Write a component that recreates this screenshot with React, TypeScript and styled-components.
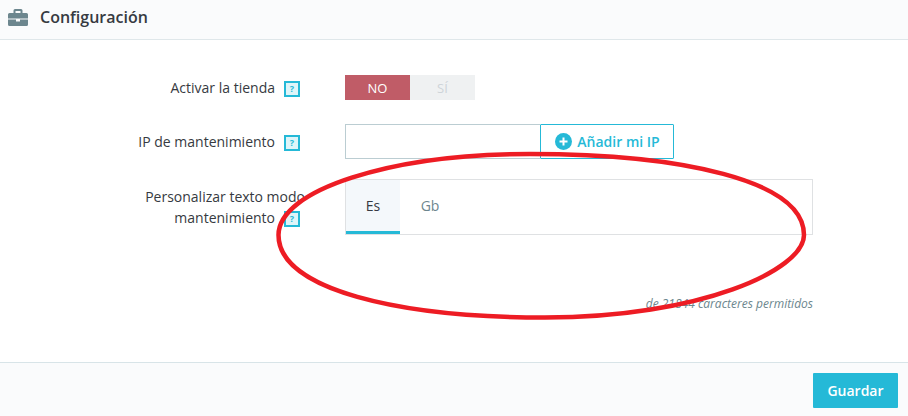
import styled, { createGlobalStyle } from "styled-components";

const GlobalStyle = createGlobalStyle`
  html, body {
    margin: 0;
    padding: 0;
    background: #fff;
    font-family: "Open Sans", "Liberation Sans", sans-serif;
    overflow: hidden;
  }
`;

const Page = styled.div`
  position: relative;
  width: 908px;
  height: 416px;
  display: flex;
  flex-direction: column;
`;

const Header = styled.div`
  height: 34px;
  box-sizing: content-box;
  display: flex;
  align-items: center;
  gap: 12px;
  padding: 0 0 5px 8px;
  background: #fafbfc;
  border-bottom: 1px solid #dfe7ea;
  color: #363a41;
  font-size: 16px;
  font-weight: 600;
  line-height: 34px;
`;

const Form = styled.div`
  flex: 1;
  display: flex;
  flex-direction: column;
  padding-top: 35px;
`;

const Row = styled.div<{ $mb: number }>`
  display: flex;
  align-items: flex-start;
  gap: 40px;
  margin-bottom: ${(p) => p.$mb}px;
`;

const Label = styled.div<{ $pt: number }>`
  width: 305px;
  box-sizing: border-box;
  padding: ${(p) => p.$pt}px 0 0 130px;
  text-align: right;
  font-size: 14px;
  line-height: 21px;
  color: #363a41;
`;

const Help = styled.span`
  display: inline-block;
  width: 16px;
  height: 16px;
  box-sizing: border-box;
  margin: 0 5px 0 9px;
  vertical-align: middle;
  border: 2px solid #25b9d7;
  background: #dff5f9;
  color: #25b9d7;
  font-size: 9px;
  font-weight: 700;
  line-height: 12px;
  text-align: center;
`;

const Switch = styled.div`
  display: flex;
  width: 130px;
  height: 25px;
`;

const SwitchOption = styled.div<{ $on?: boolean }>`
  flex: 1;
  display: flex;
  align-items: center;
  justify-content: center;
  font-size: 13px;
  font-weight: 400;
  background: ${(p) => (p.$on ? "#c05c67" : "#eff1f2")};
  color: ${(p) => (p.$on ? "#fff" : "#ced4d9")};
`;

const InputGroup = styled.div`
  display: flex;
  height: 35px;
`;

const IpInput = styled.input`
  width: 195px;
  height: 35px;
  box-sizing: border-box;
  padding: 0 8px;
  border: 1px solid #bbcdd2;
  border-right: 0;
  background: #fff;
  outline: none;
`;

const AddButton = styled.button`
  width: 134px;
  height: 35px;
  box-sizing: border-box;
  display: flex;
  align-items: center;
  justify-content: center;
  gap: 5px;
  padding: 0 0 0 1px;
  border: 1px solid #25b9d7;
  border-radius: 1px;
  background: #fff;
  color: #25b9d7;
  font-family: inherit;
  font-size: 14px;
  font-weight: 600;
`;

const TabBox = styled.div`
  width: 468px;
  height: 56px;
  box-sizing: border-box;
  display: flex;
  border: 1px solid #dfe1e3;
`;

const Tab = styled.div<{ $active?: boolean }>`
  width: ${(p) => (p.$active ? 54 : 60)}px;
  box-sizing: border-box;
  display: flex;
  align-items: center;
  justify-content: center;
  font-size: 14px;
  background: ${(p) => (p.$active ? "#f4f8fb" : "transparent")};
  color: ${(p) => (p.$active ? "#363a41" : "#6c868e")};
  border-bottom: 3px solid ${(p) => (p.$active ? "#25b9d7" : "transparent")};
`;

const Counter = styled.div`
  width: 813px;
  text-align: right;
  font-size: 12px;
  font-style: italic;
  line-height: 15px;
  color: #6c868e;
`;

const Footer = styled.div`
  height: 54px;
  display: flex;
  align-items: flex-start;
  justify-content: flex-end;
  padding: 10px 10px 0 0;
  box-sizing: border-box;
  background: #fafbfc;
  border-top: 1px solid #d8e4e8;
`;

const SaveButton = styled.button`
  width: 85px;
  height: 35px;
  padding: 0;
  border: 0;
  border-radius: 1px;
  background: #25b9d7;
  color: #fff;
  font-family: inherit;
  font-size: 14px;
  font-weight: 600;
`;

const Scribble = styled.svg`
  position: absolute;
  left: 0;
  top: 0;
  pointer-events: none;
`;

function BriefcaseIcon() {
  return (
    <svg width="20" height="17" viewBox="0 0 20 17" fill="#6c868e">
      <path d="M7 0h6a1.500 1.500 0 0 1 1.500 1.500V4h-2V2h-5v2h-2V1.500A1.500 1.500 0 0 1 7 0z" />
      <path d="M1.500 4h17A1.500 1.500 0 0 1 20 5.500V9.500H0V5.500A1.500 1.500 0 0 1 1.500 4z" />
      <path d="M0 10.500h8v2h4v-2h8v5A1.500 1.500 0 0 1 18.500 17h-17A1.500 1.500 0 0 1 0 15.500z" />
    </svg>
  );
}

function PlusCircleIcon() {
  return (
    <svg width="17" height="17" viewBox="0 0 17 17">
      <circle cx="8.500" cy="8.500" r="8.500" fill="#25b9d7" />
      <path d="M8.500 4.500v8M4.500 8.500h8" stroke="#fff" strokeWidth="2" />
    </svg>
  );
}

export default function App() {
  return (
    <Page>
      <GlobalStyle />
      <Header>
        <BriefcaseIcon />
        Configuración
      </Header>
      <Form>
        <Row $mb={24}>
          <Label $pt={2}>
            Activar la tienda
            <Help>?</Help>
          </Label>
          <Switch>
            <SwitchOption $on>NO</SwitchOption>
            <SwitchOption>SÍ</SwitchOption>
          </Switch>
        </Row>
        <Row $mb={20}>
          <Label $pt={7}>
            IP de mantenimiento
            <Help>?</Help>
          </Label>
          <InputGroup>
            <IpInput />
            <AddButton>
              <PlusCircleIcon />
              Añadir mi IP
            </AddButton>
          </InputGroup>
        </Row>
        <Row $mb={61}>
          <Label $pt={7}>
            Personalizar texto modo mantenimiento
            <Help>?</Help>
          </Label>
          <TabBox>
            <Tab $active>Es</Tab>
            <Tab>Gb</Tab>
          </TabBox>
        </Row>
        <Counter>de 21844 caracteres permitidos</Counter>
      </Form>
      <Footer>
        <SaveButton>Guardar</SaveButton>
      </Footer>
      {/* hand-drawn red ring over the form */}
      <Scribble width="908" height="416">
        <path
          d="M278.500 235C278.500 190 390 154 530 154C680 154 804 180 804 235C804 270 700 317.500 545 317.500C400 317.500 278.500 290 278.500 235Z"
          fill="none"
          stroke="#ed1c24"
          strokeWidth="4.500"
        />
      </Scribble>
    </Page>
  );
}
